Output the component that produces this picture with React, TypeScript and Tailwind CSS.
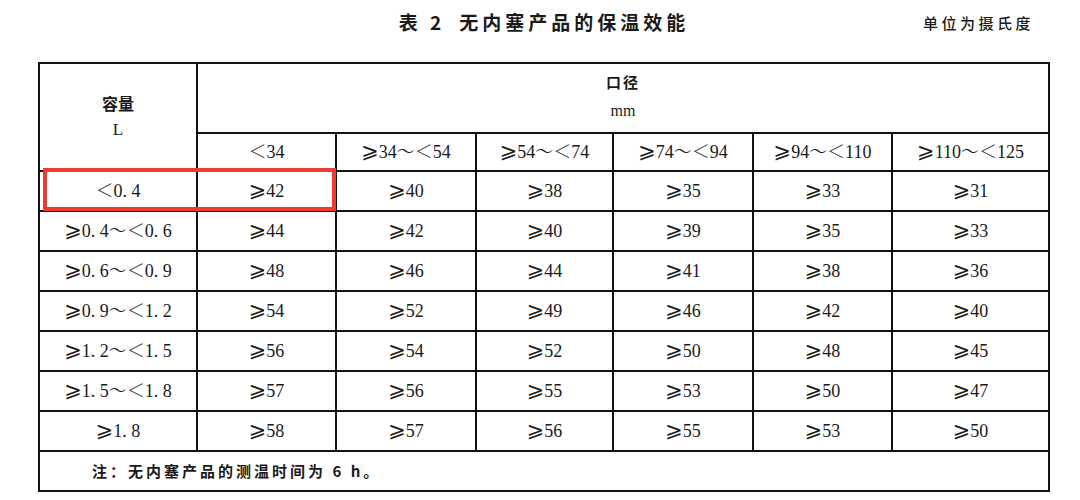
const serif = 'font-["Liberation_Serif","Noto_Serif_CJK_SC","Noto_Sans_CJK_SC",serif]'

const diameters = ['＜34', '⩾34～＜54', '⩾54～＜74', '⩾74～＜94', '⩾94～＜110', '⩾110～＜125']

const rows: [string, string[]][] = [
  ['＜0. 4', ['⩾42', '⩾40', '⩾38', '⩾35', '⩾33', '⩾31']],
  ['⩾0. 4～＜0. 6', ['⩾44', '⩾42', '⩾40', '⩾39', '⩾35', '⩾33']],
  ['⩾0. 6～＜0. 9', ['⩾48', '⩾46', '⩾44', '⩾41', '⩾38', '⩾36']],
  ['⩾0. 9～＜1. 2', ['⩾54', '⩾52', '⩾49', '⩾46', '⩾42', '⩾40']],
  ['⩾1. 2～＜1. 5', ['⩾56', '⩾54', '⩾52', '⩾50', '⩾48', '⩾45']],
  ['⩾1. 5～＜1. 8', ['⩾57', '⩾56', '⩾55', '⩾53', '⩾50', '⩾47']],
  ['⩾1. 8', ['⩾58', '⩾57', '⩾56', '⩾55', '⩾53', '⩾50']],
]

// the slanted ⩾ is drawn larger than the digits in the printed standard
function Val({ text }: { text: string }) {
  const parts = text.split(/(⩾)/)
  return (
    <>
      {parts.map((p, i) =>
        p === '⩾' ? (
          <span key={i} className='font-["DejaVu_Sans",sans-serif] text-[21px] leading-none'>⩾</span>
        ) : (
          <span key={i}>{p}</span>
        )
      )}
    </>
  )
}

export default function App() {
  return (
    <div className={`w-[1080px] h-[500px] bg-white text-[#1a1a1a] ${serif}`}>
      <div className="ml-[38px] w-[1012px] h-[62px] grid grid-cols-[1fr_auto_1fr] items-start pt-[10px]">
        <div />
        <h1 className='font-["Noto_Sans_CJK_SC",sans-serif] font-bold text-[19px] leading-[24px] tracking-[4px]'>
          表 2<span className="inline-block w-[14px]" />无内塞产品的保温效能
        </h1>
        <div className='text-right pr-[16px] pt-[1px] font-["Noto_Sans_CJK_SC",sans-serif] font-medium text-[15px] leading-[24px] tracking-[3.5px]'>
          单位为摄氏度
        </div>
      </div>

      <div className="relative ml-[38px] w-[1012px]">
        <table className="w-full table-fixed border-collapse border-[2.5px] border-[#111] text-[18px]">
          <colgroup>
            <col className="w-[158px]" />
            <col className="w-[139px]" />
            <col className="w-[140px]" />
            <col className="w-[137px]" />
            <col className="w-[140px]" />
            <col className="w-[139px]" />
            <col />
          </colgroup>
          <tbody>
            <tr className="h-[70px]">
              <td rowSpan={2} className="border-2 border-[#111] text-center align-top pt-[28px]">
                <div className='font-["Noto_Sans_CJK_SC",sans-serif] font-bold text-[16px] leading-[22px]'>容量</div>
                <div className="text-[17px] leading-[32px]">L</div>
              </td>
              <td colSpan={6} className="border-2 border-[#111] text-center align-top pt-[5px]">
                <div className='font-["Noto_Sans_CJK_SC",sans-serif] font-semibold text-[15px] leading-[26px] tracking-[2px]'>口径</div>
                <div className="text-[16px] leading-[32px]">mm</div>
              </td>
            </tr>
            <tr className="h-[38px]">
              {diameters.map((d) => (
                <td key={d} className="border-2 border-[#111] text-center whitespace-nowrap">
                  <Val text={d} />
                </td>
              ))}
            </tr>
            {rows.map(([cap, vals]) => (
              <tr key={cap} className="h-[40px]">
                <td className="border-2 border-[#111] text-center whitespace-nowrap">
                  <Val text={cap} />
                </td>
                {vals.map((v, i) => (
                  <td key={i} className="border-2 border-[#111] text-center">
                    <Val text={v} />
                  </td>
                ))}
              </tr>
            ))}
            <tr className="h-[40px]">
              <td colSpan={7} className='border-2 border-[#111] pl-[52px] font-["Noto_Sans_CJK_SC",sans-serif] font-semibold text-[15px] tracking-[3px]'>
                注：无内塞产品的测温时间为 6 h。
              </td>
            </tr>
          </tbody>
        </table>
        <div className="absolute left-[5px] top-[106px] w-[293px] h-[43px] border-4 border-[#ee3a33]" />
      </div>
    </div>
  )
}
